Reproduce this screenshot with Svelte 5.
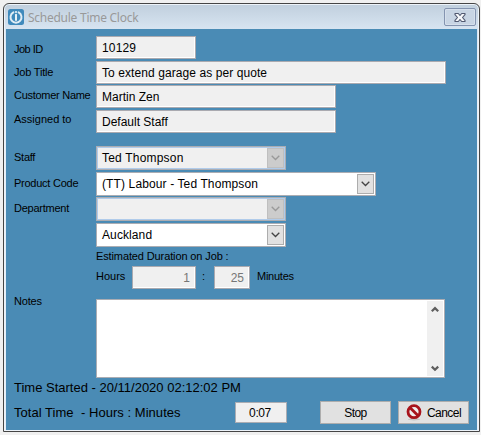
<script>
  const details = [
    { label: 'Job ID', value: '10129', width: 100, gap: 2, ls: 0.15, lls: -0.5, dy: 2 },
    { label: 'Job Title', value: 'To extend garage as per quote', width: 350, gap: 1, ls: 0.08, lls: -0.2, dy: 0 },
    { label: 'Customer Name', value: 'Martin Zen', width: 240, gap: 2, ls: 0, lls: -0.28, dy: -1 },
    { label: 'Assigned to', value: 'Default Staff', width: 240, gap: 13, ls: 0, lls: 0, dy: -2 }
  ];
  const selects = [
    { label: 'Staff', value: 'Ted Thompson', width: 190, gap: 2, ls: 0.2, disabled: true },
    { label: 'Product Code', value: '(TT) Labour - Ted Thompson', width: 280, gap: 1, ls: 0.12 },
    { label: 'Department', value: '', width: 190, gap: 2, ls: 0, disabled: true },
    { label: '', value: 'Auckland', width: 190, gap: 0, ls: 0.1 }
  ];
</script>

<main>
  <section class="window">
    <header>
      <svg class="logo" width="16" height="16" viewBox="0 0 16 16">
        <rect width="16" height="16" rx="2.5" fill="#408abc" />
        <path d="M5.4 3.3a5.5 5.5 0 1 0 5.2 0" fill="none" stroke="#e0edf5" stroke-width="2" stroke-linecap="round" />
        <path d="M8 5.8v5.2" stroke="#e8f2f8" stroke-width="2" stroke-linecap="round" />
        <circle cx="8" cy="3" r="1.1" fill="#e8f2f8" />
      </svg>
      <h1>Schedule Time Clock</h1>
      <button class="close" aria-label="Close">
        <svg width="14" height="11" viewBox="0 0 14 11">
          <path d="M2 1.5h3.3L7 3.5l1.7-2H12v1.2L9.5 5.5 12 8.3v1.2H8.7L7 7.5l-1.7 2H2V8.3l2.5-2.8L2 2.7z" fill="#f5f7fa" stroke="#515970" stroke-width="1.1" stroke-linejoin="round" />
        </svg>
      </button>
    </header>

    <div class="body">
      {#each details as d}
        <div class="row" style="margin-bottom:{d.gap}px">
          <span class="label" style="letter-spacing:{d.lls}px;padding-top:{d.dy + 3}px">{d.label}</span>
          <div class="field" style="width:{d.width}px;letter-spacing:{d.ls}px">{d.value}</div>
        </div>
      {/each}

      {#each selects as s}
        <div class="row tall" style="margin-bottom:{s.gap}px">
          <span class="label">{s.label}</span>
          <div class="select" class:disabled={s.disabled} style="width:{s.width}px;letter-spacing:{s.ls}px">
            <span>{s.value}</span>
            <i class="drop">
              <svg width="9" height="6" viewBox="0 0 9 6"><path d="M.7.8 4.5 4.5 8.3.8" fill="none" stroke="currentColor" stroke-width="1.3" /></svg>
            </i>
          </div>
        </div>
      {/each}

      <div class="estimate">Estimated Duration on Job :</div>
      <div class="duration">
        <span class="hours">Hours</span>
        <div class="field num h">1</div>
        <span class="colon">:</span>
        <div class="field num m">25</div>
        <span class="minutes">Minutes</span>
      </div>

      <div class="notes">
        <span class="label">Notes</span>
        <div class="area">
          <div class="scroll">
            <svg width="8" height="7" viewBox="0 0 8 7"><path d="M.8 5.3 4 2.1l3.2 3.2" fill="none" stroke="#5e5e5e" stroke-width="2.2" /></svg>
            <svg width="8" height="7" viewBox="0 0 8 7"><path d="M.8 1.6 4 4.8l3.2-3.2" fill="none" stroke="#5e5e5e" stroke-width="2.2" /></svg>
          </div>
        </div>
      </div>

      <div class="started">Time Started - 20/11/2020 02:12:02 PM</div>
      <footer>
        <span class="total">Total Time&nbsp; - Hours : Minutes</span>
        <div class="clock">0:07</div>
        <button class="action stop">Stop</button>
        <button class="action cancel">
          <svg width="16" height="17" viewBox="0 0 16 17">
            <ellipse cx="8" cy="15.4" rx="6" ry="1" fill="#c4c4c4" />
            <circle cx="8" cy="7.7" r="6" fill="#f0eeee" stroke="#a8141c" stroke-width="2.8" />
            <path d="m3.9 3.6 8.2 8.2" stroke="#a8141c" stroke-width="2.8" />
          </svg>
          <span>Cancel</span>
        </button>
      </footer>
    </div>
  </section>
</main>

<style>
  :global(body) { background: #f0f0f0; }
  * { box-sizing: border-box; }
  main {
    width: 481px; height: 435px; padding: 3px 1px 3px 3px; overflow: hidden;
    background: #f0f0f0; color: #000;
    font: 12px/14px "Liberation Sans", Arial, sans-serif;
  }
  .window {
    width: 477px; height: 429px; border: 1px solid #454545; border-radius: 6px 6px 0 0;
    background: linear-gradient(#c0cfdd, #d7e4f1 25px, #e6eef7 60px); padding: 0 2px 2px;
    box-shadow: inset 0 0 0 1px #edf3f9; overflow: hidden;
  }
  header { height: 25px; display: flex; padding: 5px 1px 0 2px; }
  .logo { flex: none; }
  h1 {
    margin: 0 auto 0 4px; font: 12px/17px "Noto Sans", "Open Sans", sans-serif;
    color: #999; white-space: pre; letter-spacing: -0.26px;
  }
  .close {
    width: 32px; height: 18px; margin-top: -1px; padding: 0; border: 1px solid #8494b0; border-radius: 2px;
    background: #c8d5e4; box-shadow: inset 0 0 0 1px #d6e0ec;
    display: flex; align-items: center; justify-content: center;
  }
  .body { height: 401px; background: #4a8bb5; padding: 7px 0 0 8px; }
  .row { display: flex; height: 23px; }
  .tall { height: 24px; }
  .label { flex: none; width: 82px; font-size: 11px; line-height: 17px; white-space: nowrap; }
  .tall .label { padding-top: 3px; letter-spacing: -0.25px; }
  .field {
    flex: none; height: 23px; border: 1px solid #aaaab0; background: #f0f0f0; line-height: 22px;
    padding-left: 5px; white-space: nowrap; box-shadow: inset -1px -1px #fff;
  }
  .select {
    display: flex; height: 24px; border: 1px solid #abadb3; background: #fff; line-height: 21px;
    padding: 1px 1px 1px 5px;
  }
  .select span { flex: 1; }
  .drop {
    width: 17px; height: 20px; border: 1px solid #adadad; background: #e1e1e1; color: #444;
    display: flex; align-items: center; justify-content: center;
  }
  .disabled { background: #f0f0f0; box-shadow: inset 0 0 0 1px #b0cbea; }
  .disabled .drop { background: #ccc; border-color: #bfbfbf; color: #999; }
  .estimate { margin: 2px 0 0 82px; font-size: 11px; line-height: 15px; height: 17px; letter-spacing: -0.12px; }
  .duration { display: flex; height: 23px; padding-left: 82px; font-size: 11px; line-height: 20px; }
  .hours { width: 36px; }
  .num { color: #767676; text-align: right; padding: 0 5px 0 0; font-size: 12px; }
  .h { width: 64px; }
  .colon { width: 18px; padding-left: 6px; }
  .m { width: 36px; }
  .minutes { padding-left: 7px; letter-spacing: -0.25px; }
  .notes { display: flex; height: 79px; margin-top: 10px; }
  .notes .label { margin-top: -6px; letter-spacing: -0.2px; }
  .area { width: 349px; background: #fff; border: 1px solid #abadb3; padding: 1px; display: flex; justify-content: flex-end; }
  .scroll { width: 16px; background: #f0f0f0; display: flex; flex-direction: column; align-items: center; justify-content: space-between; padding: 5px 0 4px; }
  .started, .total { font-size: 13px; white-space: pre; }
  .started { height: 23px; line-height: 19px; letter-spacing: 0; }
  footer { display: flex; }
  .total { width: 221px; line-height: 24px; letter-spacing: 0.04px; }
  .clock { width: 52px; height: 21px; margin: 1px 33px 0 0; border: 1px solid #abadb3; background: #f0f0f0; text-align: center; line-height: 20px; padding-right: 2px; letter-spacing: -0.4px; }
  .action {
    width: 71px; height: 23px; padding: 0; border: 1px solid #adadad; background: #e1e1e1;
    font: inherit; letter-spacing: -0.55px; color: #000; display: flex; align-items: center; justify-content: center;
  }
  .cancel { margin-left: 7px; gap: 5px; }
</style>
